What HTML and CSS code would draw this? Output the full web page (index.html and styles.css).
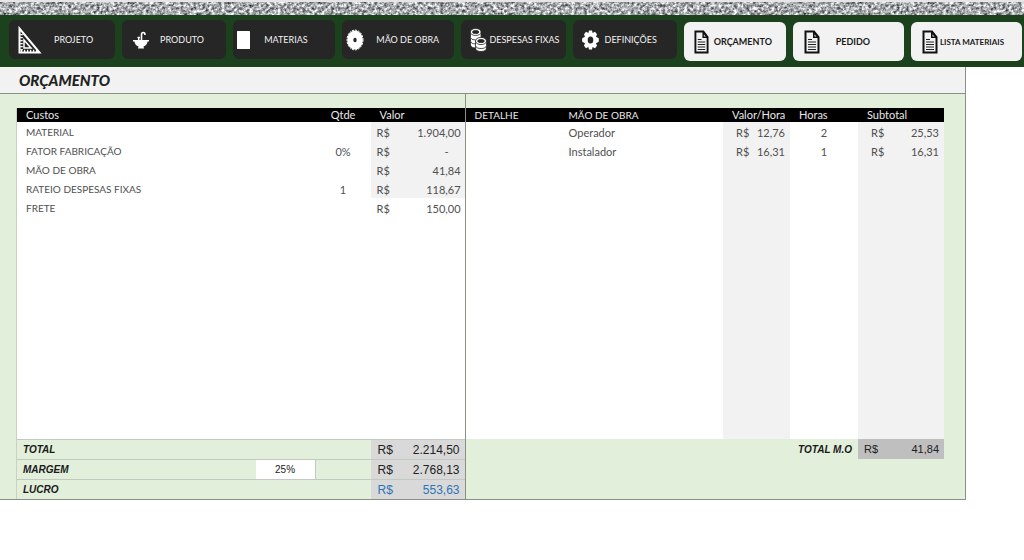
FILE: index.html
```html
<!DOCTYPE html>
<html lang="pt-BR">
<head>
<meta charset="utf-8">
<title>Orçamento</title>
<link rel="stylesheet" href="styles.css">
</head>
<body>
<svg class="granite" aria-hidden="true">
  <filter id="grain" x="0" y="0" width="100%" height="100%" color-interpolation-filters="sRGB">
    <feTurbulence type="fractalNoise" baseFrequency="0.32 0.36" numOctaves="3" seed="9"/>
    <feColorMatrix type="matrix" values="1.2 0.5 0 0 -0.19  1.2 0.5 0 0 -0.18  1.2 0.5 0 0 -0.17  0 0 0 0 1"/>
  </filter>
  <rect width="100%" height="100%" filter="url(#grain)"/>
</svg>

<svg class="defs" aria-hidden="true">
  <symbol id="doc" viewBox="0 0 16 24" preserveAspectRatio="none">
    <path d="M1.500 1.500H10L14.500 7V22.500H1.500Z" fill="none" stroke="#111" stroke-width="2"/>
    <path d="M9 1V8H15Z" fill="#111"/>
    <path d="M10.500 4.500V6.500H12.500Z" fill="#f2f2f2"/>
    <path d="M4 9.500H8M4 12H12M4 14.500H12M4 17H12M4 19.500H12" stroke="#222" stroke-width="1.200"/>
  </symbol>
</svg>

<nav class="menu">
  <button type="button" class="tab tab-projeto">
    <svg width="24" height="28" viewBox="0 0 24 28" fill="none" stroke="#fff">
      <path d="M1.500 2.500V26.500H21.500Z" stroke-width="2"/>
      <path d="M6 14V22H13Z" stroke-width="1.500"/>
      <path d="M3.500 8V26" stroke-width="2.500" stroke-dasharray="1.200 1.800"/>
      <path d="M3 25H19" stroke-width="2.500" stroke-dasharray="1.200 1.800"/>
    </svg>
    <span>PROJETO</span>
  </button>
  <button type="button" class="tab tab-produto">
    <svg width="16" height="18" viewBox="0 0 16 18">
      <path d="M8.500 9V3.500Q8.500 1.500 10.300 1.500Q12 1.500 12 4" fill="none" stroke="#fff" stroke-width="1.600"/>
      <path d="M4.500 6.500H7M5.700 6.500V9" stroke="#fff" stroke-width="1.400"/>
      <path d="M0 9H16V10.500H14.500Q14 14.500 10.500 15.500L11 17.500H5L5.500 15.500Q2 14.500 1.500 10.500H0Z" fill="#fff"/>
    </svg>
    <span>PRODUTO</span>
  </button>
  <button type="button" class="tab tab-materias">
    <svg width="13" height="18" viewBox="0 0 13 18"><rect width="13" height="18" rx="0.500" fill="#fff"/></svg>
    <span>MATERIAS</span>
  </button>
  <button type="button" class="tab tab-obra">
    <svg width="18" height="22" viewBox="0 0 18 22">
      <ellipse cx="9" cy="11" rx="7.800" ry="9.600" fill="#fff"/>
      <ellipse cx="9" cy="11" rx="8" ry="9.900" fill="none" stroke="#fff" stroke-width="1" stroke-dasharray="2 1"/>
      <ellipse cx="9" cy="11" rx="1.700" ry="2.200" fill="#262626"/>
    </svg>
    <span>MÃO DE OBRA</span>
  </button>
  <button type="button" class="tab tab-despesas">
    <svg width="17" height="24" viewBox="0 0 17 24" fill="#fff" stroke="#262626" stroke-width="0.800">
      <path d="M0.500 13.500V17Q1 20 6 20H10V13.500Z"/>
      <path d="M0.500 9V13Q1 16 6 16T11 13V9Z"/>
      <path d="M0.500 4V9.500Q1 12 5.500 12T11 9.500V4Z"/>
      <ellipse cx="5.700" cy="4" rx="5.400" ry="3.500"/>
      <ellipse cx="5.700" cy="4" rx="3.200" ry="1.600" fill="#262626"/>
      <path d="M5.500 17V20Q6 23.500 11 23.500T16.500 20V17Z"/>
      <path d="M5.500 13V17.500Q6 20.500 11 20.500T16.500 17.500V13Z"/>
      <ellipse cx="11" cy="13" rx="5.500" ry="3.600"/>
      <ellipse cx="11" cy="13" rx="3.300" ry="1.600" fill="#262626"/>
    </svg>
    <span>DESPESAS FIXAS</span>
  </button>
  <button type="button" class="tab tab-definicoes">
    <svg width="17" height="20" viewBox="0 0 17 20">
      <path fill="#fff" fill-rule="evenodd" d="M7 0.500H10L10.600 3L13 1.800L15 4.200L14 6.800L16.800 8.300V11.700L14 13.200L15 15.800L13 18.200L10.600 17L10 19.500H7L6.400 17L4 18.200L2 15.800L3 13.200L0.200 11.700V8.300L3 6.800L2 4.200L4 1.800L6.400 3ZM8.500 6.500A2.800 3.500 0 1 0 8.500 13.500A2.800 3.500 0 1 0 8.500 6.500Z"/>
    </svg>
    <span>DEFINIÇÕES</span>
  </button>
  <button type="button" class="tab tab-light tab-orcamento">
    <svg width="15" height="24"><use href="#doc"/></svg>
    <span>ORÇAMENTO</span>
  </button>
  <button type="button" class="tab tab-light tab-pedido">
    <svg width="16" height="24"><use href="#doc"/></svg>
    <span>PEDIDO</span>
  </button>
  <button type="button" class="tab tab-light tab-lista">
    <svg width="16" height="24"><use href="#doc"/></svg>
    <span>LISTA MATERIAIS</span>
  </button>
</nav>

<main class="sheet">
  <h1>ORÇAMENTO</h1>
  <div class="panels">
    <section class="panel costs">
      <table>
        <colgroup><col><col class="c-margin"><col class="c-qty"><col class="c-value"></colgroup>
        <thead>
          <tr><th colspan="2">Custos</th><th class="center">Qtde</th><th>Valor</th></tr>
        </thead>
        <tbody>
          <tr><td colspan="2" class="caps">MATERIAL</td><td></td><td class="shade"><div class="money"><span>R$</span><span>1.904,00</span></div></td></tr>
          <tr><td colspan="2" class="caps">FATOR FABRICAÇÃO</td><td class="center">0%</td><td class="shade"><div class="money"><span>R$</span><span class="dash">-</span></div></td></tr>
          <tr><td colspan="2" class="caps">MÃO DE OBRA</td><td></td><td class="shade"><div class="money"><span>R$</span><span>41,84</span></div></td></tr>
          <tr><td colspan="2" class="caps">RATEIO DESPESAS FIXAS</td><td class="center">1</td><td class="shade"><div class="money"><span>R$</span><span>118,67</span></div></td></tr>
          <tr><td colspan="2" class="caps">FRETE</td><td></td><td><div class="money"><span>R$</span><span>150,00</span></div></td></tr>
          <tr class="fill-costs"><td colspan="4"></td></tr>
        </tbody>
        <tfoot>
          <tr><th colspan="3">TOTAL</th><td class="sum"><div class="money"><span>R$</span><span>2.214,50</span></div></td></tr>
          <tr><th><label for="margem">MARGEM</label></th><td class="margin-cell"><input id="margem" type="text" value="25%"></td><td></td><td class="sum"><div class="money"><span>R$</span><span>2.768,13</span></div></td></tr>
          <tr><th colspan="3">LUCRO</th><td class="sum profit"><div class="money"><span>R$</span><span>553,63</span></div></td></tr>
        </tfoot>
      </table>
    </section>
    <section class="panel labor">
      <table>
        <colgroup><col class="c-detail"><col><col class="c-rate"><col class="c-hours"><col class="c-sub"></colgroup>
        <thead>
          <tr><th class="caps">DETALHE</th><th class="caps flush">MÃO DE OBRA</th><th>Valor/Hora</th><th>Horas</th><th>Subtotal</th></tr>
        </thead>
        <tbody>
          <tr><td></td><td class="flush">Operador</td><td class="shade rate"><div class="money"><span>R$</span><span>12,76</span></div></td><td class="center">2</td><td class="shade sub"><div class="money"><span>R$</span><span>25,53</span></div></td></tr>
          <tr><td></td><td class="flush">Instalador</td><td class="shade rate"><div class="money"><span>R$</span><span>16,31</span></div></td><td class="center">1</td><td class="shade sub"><div class="money"><span>R$</span><span>16,31</span></div></td></tr>
          <tr class="fill-labor"><td></td><td></td><td class="shade"></td><td></td><td class="shade"></td></tr>
        </tbody>
        <tfoot>
          <tr><th colspan="4">TOTAL M.O</th><td class="sum-labor"><div class="money"><span>R$</span><span>41,84</span></div></td></tr>
        </tfoot>
      </table>
    </section>
  </div>
</main>
</body>
</html>
```
FILE: styles.css
```css
* { box-sizing: border-box; }

body {
  margin: 0;
  background: #fff;
  color: #505050;
  font-family: Lato, "Open Sans", sans-serif;
  font-size: 11px;
  line-height: 15px;
}

.defs { position: absolute; width: 0; height: 0; }

.granite {
  display: block;
  width: 100%;
  height: 15px;
  border-top: 2px solid #e6e6e6;
}

.menu {
  display: grid;
  grid-template-columns: 106fr 104fr 102fr 112fr 104fr 104fr 102fr 111fr 111fr;
  align-items: start;
  gap: 7px;
  height: 52px;
  padding: 5px 2px 0 9px;
  background: #1b421d;
}

.tab {
  display: flex;
  align-items: center;
  min-width: 0;
  height: 39px;
  padding: 0;
  border: 0;
  border-radius: 6px;
  background: #262626;
  color: #f2f2f2;
  font: 9px/14px Lato, "Open Sans", sans-serif;
  white-space: nowrap;
}
.tab svg { flex: none; }
.tab-light {
  margin-top: 2px;
  background: #f2f2f2;
  color: #1a1a1a;
  font-weight: 700;
}
.tab-projeto { padding-left: 9px; gap: 12px; }
.tab-produto { padding-left: 11px; gap: 11px; }
.tab-materias { padding-left: 4px; gap: 14px; }
.tab-obra { padding-left: 4px; gap: 12px; }
.tab-despesas { padding-left: 9px; gap: 2px; }
.tab-definicoes { padding-left: 9px; gap: 6px; }
.tab-orcamento { padding-left: 10px; gap: 5px; }
.tab-pedido { padding-left: 11px; gap: 16px; }
.tab-lista { padding-left: 11px; gap: 2px; font-size: 8px; }

.sheet {
  width: calc(100% - 58px);
  border-right: 1px solid #8a8f88;
  border-bottom: 1px solid #8a8f88;
  background: #e2efda;
}

h1 {
  margin: 0;
  padding: 0 19px;
  border-bottom: 1px solid #8a8f88;
  background: #f2f2f2;
  color: #222;
  font: italic 900 15px/26px Lato, "Open Sans", sans-serif;
}

.panels { display: flex; }
.panel { padding-top: 14px; }
.costs {
  flex: 450 1 0;
  padding-left: 16px;
  border-right: 1px solid #8a8f88;
}
.labor { flex: 480 1 0; padding-right: 21px; }

table {
  width: 100%;
  border-collapse: separate;
  border-spacing: 0;
  table-layout: fixed;
}
.costs table { border-left: 1px solid #c9d1c5; }
.c-margin { width: 60px; }
.c-qty { width: 55px; }
.c-value { width: 94px; }
.c-detail { width: 103px; }
.c-rate { width: 67px; }
.c-hours { width: 68px; }
.c-sub { width: 86px; }

th, td { padding: 0 9px; text-align: left; font-weight: 400; }
thead th { height: 14px; line-height: 14px; background: #000; color: #e8e8e8; }
tbody td { height: 19px; padding-top: 2px; background: #fff; }
.caps { font-size: 10px; }
.center, thead .center { text-align: center; }
.flush { padding-left: 0; }
tbody .shade { background: #f2f2f2; }
.money { display: flex; justify-content: space-between; }
.costs .money { padding: 0 4px 0 6px; }
.costs td:has(.money) { padding-right: 0; padding-left: 0; }
.costs .dash { padding-right: 12px; }
.labor .rate, .labor .sub { padding-right: 5px; padding-left: 13px; }
.fill-costs td { height: 222px; }
.fill-labor td { height: 279px; }

tfoot { color: #222; font-family: "Liberation Sans", Arial, sans-serif; }
tfoot th {
  padding: 0 6px;
  color: #1a1a1a;
  font-size: 10px;
  font-style: italic;
  font-weight: 700;
}
.costs tfoot th, .costs tfoot td { height: 20px; border-top: 1px solid #c3c9c0; }
.costs .sum { padding-top: 2px; background: #d9d9d9; font-size: 12px; }
.costs .sum .money { padding-right: 5px; padding-left: 7px; }
.costs .profit { color: #2e75b6; }
.costs .margin-cell { padding: 0; background: #fff; }
.margin-cell input {
  display: block;
  width: 100%;
  height: 19px;
  padding: 0;
  border: 0;
  border-right: 1px solid #c3c9c0;
  background: transparent;
  color: #222;
  font: 10px/19px "Liberation Sans", Arial, sans-serif;
  text-align: center;
}
.labor tfoot th { height: 20px; text-align: right; }
.labor .sum-labor { padding: 0 5px 0 6px; background: #bfbfbf; }
```
